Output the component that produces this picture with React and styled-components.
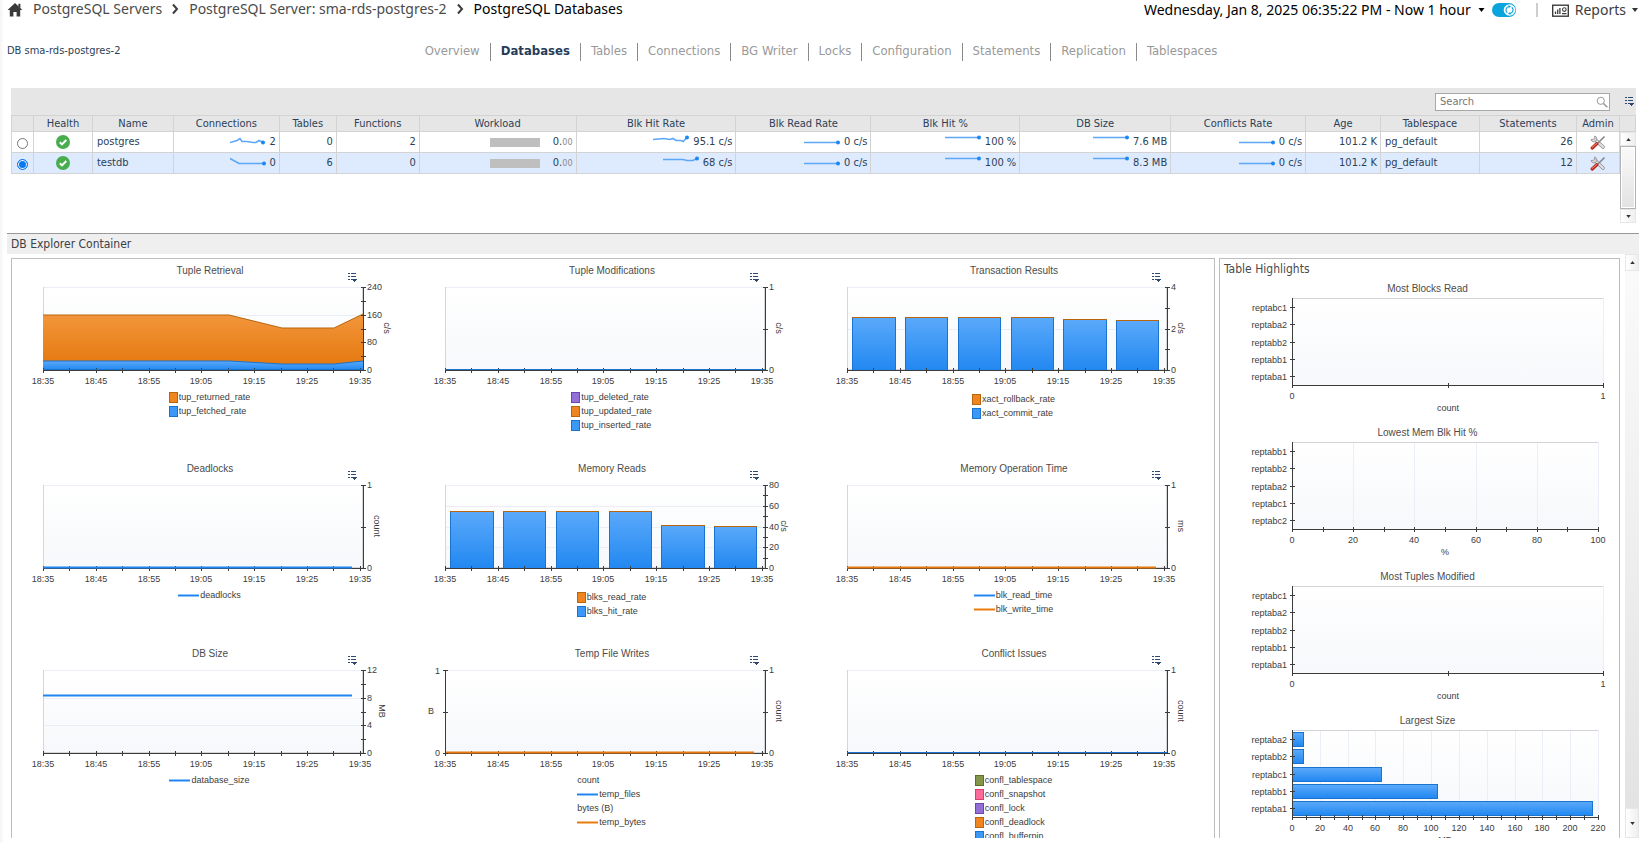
import { useState } from "react";
import styled, { createGlobalStyle } from "styled-components";

const GlobalStyle = createGlobalStyle`
  * {
    box-sizing: border-box;
  }
  body {
    margin: 0;
    background: #fff;
    font-family: "DejaVu Sans Condensed", "Noto Sans", sans-serif;
    font-size: 11px;
    color: #2b3f58;
  }
  button {
    padding: 0;
    border: none;
    background: none;
    font: inherit;
    color: inherit;
    cursor: pointer;
  }
  a {
    color: inherit;
    text-decoration: none;
  }
  svg {
    display: block;
  }
`;

const Page = styled.div`
  height: 100vh;
  display: flex;
  flex-direction: column;
  overflow: hidden;
  padding-bottom: 5px;
  background: linear-gradient(to right, #f4f4f4, #fff 4px);
`;

const TopBar = styled.header`
  display: flex;
  align-items: flex-start;
  justify-content: space-between;
  height: 19px;
  padding: 0 4px 0 7px;
  font-family: "Noto Sans", sans-serif;
  font-size: 14px;
  line-height: 18px;
`;

const Breadcrumb = styled.nav`
  display: flex;
  align-items: center;
  color: #4a4a4a;
`;

const Crumb = styled.a`
  color: ${(props) => (props.$current ? "#000" : "#4a4a4a")};
`;

const HomeLink = styled.a`
  margin-right: 10px;
`;

const Chevron = styled.svg`
  margin: 0 10px 0 9px;
`;

const TopTools = styled.div`
  display: flex;
  align-items: center;
  padding-top: 1px;
`;

const TimeButton = styled.button`
  display: flex;
  align-items: center;
  gap: 7px;
  color: #000;
`;

const Toggle = styled.button`
  margin-left: 7px;
`;

const ToolDivider = styled.span`
  width: 2px;
  height: 14px;
  margin: 0 14px 0 20px;
  background: #d0cdd0;
`;

const ReportsButton = styled.button`
  display: flex;
  align-items: center;
  gap: 6px;
  color: #3c3c3c;
`;

const SubBar = styled.div`
  display: grid;
  grid-template-columns: 1fr auto 1fr;
  align-items: center;
  height: 18px;
  margin: 24px 0 27px;
  padding: 0 7px;
`;

const DbLabel = styled.div`
  font-size: 11px;
  line-height: 16px;
  padding-bottom: 2px;
`;

const Tabs = styled.nav`
  display: flex;
  font-size: 13px;
  line-height: 16px;
`;

const Tab = styled.a`
  padding: 0 10px 2px;
  border-left: 1px solid #8c8c8c;
  color: ${(props) => (props.$active ? "#263c58" : "#999")};
  font-weight: ${(props) => (props.$active ? "bold" : "normal")};
  &:first-child {
    border-left: none;
  }
`;

const TablePanel = styled.section`
  margin: 0 6px 10px 11px;
`;

const Toolbar = styled.div`
  display: flex;
  align-items: center;
  justify-content: flex-end;
  gap: 15px;
  height: 27px;
  padding-right: 1px;
  background: #e6e6e6;
`;

const SearchBox = styled.label`
  display: flex;
  align-items: center;
  width: 175px;
  height: 18px;
  padding: 0 1px 0 4px;
  border: 1px solid #a8a8a8;
  background: #fff;
`;

const SearchInput = styled.input`
  flex: 1;
  min-width: 0;
  padding: 0;
  border: none;
  outline: none;
  font: inherit;
  &::placeholder {
    color: #777;
  }
`;

const TableArea = styled.div`
  display: flex;
`;

const Table = styled.table`
  flex: 1;
  width: 100%;
  align-self: flex-start;
  table-layout: fixed;
  border-collapse: collapse;
`;

const Th = styled.th`
  height: 16px;
  padding: 0;
  border: 1px solid #d3d3d3;
  background: #e6e6e6;
  font-weight: normal;
  line-height: 14px;
  text-align: center;
  white-space: nowrap;
`;

const Tr = styled.tr`
  background: ${(props) => (props.$selected ? "#deeafe" : "#fff")};
`;

const Td = styled.td`
  height: 21px;
  padding: 0 3px 0 4px;
  border: 1px solid #d3d3d3;
  line-height: 14px;
  white-space: nowrap;
  text-align: ${(props) => props.$align || "right"};
`;

const CellRow = styled.div`
  display: flex;
  align-items: center;
  justify-content: ${(props) => (props.$center ? "center" : "flex-end")};
  gap: 4px;
`;

const Radio = styled.input`
  appearance: none;
  width: 11px;
  height: 11px;
  margin: 3px 0 0;
  border: 1px solid #767676;
  border-radius: 50%;
  background: #fff;
  &:checked {
    border-color: #0b78f0;
    background: #0b78f0;
    box-shadow: inset 0 0 0 1px #fff;
  }
`;

const WorkloadBar = styled.span`
  width: 50px;
  height: 9px;
  margin-right: 9px;
  background: #bfbfbf;
`;

const Decimals = styled.small`
  font-size: 9px;
  color: #8a8a8a;
`;

const TableScroll = styled.div`
  display: flex;
  flex-direction: column;
  width: 16px;
  height: 108px;
`;

const ScrollHead = styled.div`
  height: 17px;
  border: 1px solid #d3d3d3;
  border-left: none;
  background: #e6e6e6;
`;

const ScrollButton = styled.button`
  display: flex;
  align-items: center;
  justify-content: center;
  height: ${(props) => props.$height || 14}px;
  border: 1px solid #e6e6e6;
  background: linear-gradient(to right, #fff, #efefef);
`;

const TableThumb = styled.div`
  flex: 1;
  border: 1px solid #b3b3b8;
  box-shadow: inset 0 0 0 1px #fff;
  background: linear-gradient(#fafafa, #e2e2e2);
`;

const Explorer = styled.section`
  flex: 1;
  display: flex;
  flex-direction: column;
  min-height: 0;
  margin: 0 3px 0 7px;
`;

const ExplorerTitle = styled.h2`
  margin: 0;
  height: 21px;
  padding-left: 4px;
  border-top: 1px solid #999;
  background: #efefef;
  font-size: 12px;
  font-weight: normal;
  line-height: 21px;
  color: #3c4046;
`;

const ExplorerBody = styled.div`
  flex: 1;
  display: flex;
  min-height: 0;
  padding-left: 4px;
`;

const ChartPanel = styled.div`
  flex: 1;
  display: grid;
  grid-template-columns: repeat(3, 1fr);
  grid-template-rows: 198px 185px 1fr;
  column-gap: 4px;
  margin-top: 4px;
  border: 1px solid #bdbdbd;
  border-bottom: none;
  overflow: hidden;
`;

const HighlightPanel = styled.div`
  width: 401px;
  margin: 4px 5px 0 4px;
  border: 1px solid #bdbdbd;
  border-bottom: none;
  overflow: hidden;
`;

const PanelTitle = styled.h3`
  margin: 0;
  height: 23px;
  padding-left: 4px;
  font-size: 12px;
  font-weight: normal;
  line-height: 20px;
  color: #4a4a4a;
`;

const ExplorerScroll = styled.div`
  display: flex;
  flex-direction: column;
  width: 14px;
`;

const ScrollTrack = styled.div`
  flex: 1;
  background: linear-gradient(#fafafa, #e3e3e3);
`;

const ChartBox = styled.figure`
  min-width: 0;
  margin: 0;
  font-family: "Liberation Sans", Arial, sans-serif;
`;

const ChartHead = styled.div`
  display: grid;
  grid-template-columns: 60px 1fr 62px;
  height: 24px;
`;

const ChartTitle = styled.figcaption`
  grid-column: 2;
  font-size: 10px;
  line-height: 24px;
  text-align: center;
  color: #4c4c4c;
`;

const MenuButton = styled.button`
  align-self: end;
  justify-self: start;
`;

const Plot = styled.svg`
  width: 100%;
  height: ${(props) => props.$height}px;
  font-family: "Liberation Sans", Arial, sans-serif;
  font-size: 9px;
  fill: #3c3c3c;
`;

const Legend = styled.ul`
  width: fit-content;
  margin: 0 auto;
  padding: ${(props) => (props.$low ? "2px 3px 0 0" : "0 3px 0 0")};
  list-style: none;
`;

const LegendItem = styled.li`
  display: flex;
  align-items: center;
  height: 14px;
  gap: 1px;
  font-size: 9px;
  color: #3c3c3c;
`;

const Swatch = styled.span`
  width: 9px;
  height: 11px;
  border: 1px solid ${(props) => props.$edge};
  background: ${(props) => props.$fill};
`;

const LineMark = styled.span`
  width: 21px;
  height: 3px;
  border: solid ${(props) => props.$glow};
  border-width: 1px 0;
  background: ${(props) => props.$line};
`;

const SideTitle = styled.figcaption`
  padding-left: 16px;
  font-size: 10px;
  line-height: 14px;
  text-align: center;
  color: #4c4c4c;
`;

const COLORS = {
  blue: { fill: "#3c98f7", edge: "#1a73cf", line: "#1e86f2", glow: "#93c4f9" },
  orange: { fill: "#ee8520", edge: "#b9650c", line: "#e6780f", glow: "#f5bf86" },
  purple: { fill: "#9370d8", edge: "#6a46b4" },
  green: { fill: "#84964a", edge: "#5d6f28" },
  pink: { fill: "#fd6b9b", edge: "#d83e70" },
};

const SPARKS = {
  top: "0,3 34,3",
  low: "0,8 34,8",
  conn1: "0,8 7,6 10,4 12,7 17,7 23,8 26,8 29,6 33,8",
  conn2: "0,3 9,8 34,8",
  hit1: "0,5 11,4 17,5 20,4 23,6 28,6 30,7 34,3",
  hit2: "0,4 20,4 24,5 30,5 34,3",
};

const COLUMNS = [
  ["", 22],
  ["Health", 59],
  ["Name", 81],
  ["Connections", 106],
  ["Tables", 57],
  ["Functions", 83],
  ["Workload", 157],
  ["Blk Hit Rate", 160],
  ["Blk Read Rate", 135],
  ["Blk Hit %", 149],
  ["DB Size", 151],
  ["Conflicts Rate", 135],
  ["Age", 75],
  ["Tablespace", 99],
  ["Statements", 97],
  ["Admin", 43],
];
const TOTAL_WIDTH = COLUMNS.reduce((sum, col) => sum + col[1], 0);

const ROWS = [
  {
    name: "postgres",
    connections: 2,
    connSpark: "conn1",
    tables: 0,
    functions: 2,
    hitRate: "95.1 c/s",
    hitSpark: "hit1",
    size: "7.6 MB",
    statements: 26,
  },
  {
    name: "testdb",
    connections: 0,
    connSpark: "conn2",
    tables: 6,
    functions: 0,
    hitRate: "68 c/s",
    hitSpark: "hit2",
    size: "8.3 MB",
    statements: 12,
  },
];

const TABS = [
  "Overview",
  "Databases",
  "Tables",
  "Connections",
  "BG Writer",
  "Locks",
  "Configuration",
  "Statements",
  "Replication",
  "Tablespaces",
];

// heights of bars and points are in plot pixels, counted from the top of the svg
const CHARTS = [
  {
    title: "Tuple Retrieval",
    unit: "c/s",
    labels: ["240", "160", "80", "0"],
    minor: 6,
    areas: [
      { color: "orange", points: "31,32 217,32 270,45 322,45 351,31" },
      { color: "blue", points: "31,78 217,78 270,81 322,81 351,78" },
    ],
    legend: [
      ["orange", "tup_returned_rate"],
      ["blue", "tup_fetched_rate"],
    ],
  },
  {
    title: "Tuple Modifications",
    unit: "c/s",
    labels: ["1", "0"],
    minor: 2,
    flat: "blue",
    legend: [
      ["purple", "tup_deleted_rate"],
      ["orange", "tup_updated_rate"],
      ["blue", "tup_inserted_rate"],
    ],
  },
  {
    title: "Transaction Results",
    unit: "c/s",
    labels: ["4", "2", "0"],
    minor: 4,
    bars: [35, 35, 35, 35, 37, 38],
    legend: [
      ["orange", "xact_rollback_rate"],
      ["blue", "xact_commit_rate"],
    ],
  },
  {
    title: "Deadlocks",
    unit: "count",
    labels: ["1", "0"],
    minor: 2,
    line: { color: "blue", y: 86 },
    marks: true,
    legend: [["blue", "deadlocks"]],
  },
  {
    title: "Memory Reads",
    unit: "c/s",
    labels: ["80", "60", "40", "20", "0"],
    minor: 8,
    bars: [31, 31, 31, 31, 45, 46],
    legend: [
      ["orange", "blks_read_rate"],
      ["blue", "blks_hit_rate"],
    ],
  },
  {
    title: "Memory Operation Time",
    unit: "ms",
    labels: ["1", "0"],
    minor: 2,
    line: { color: "orange", y: 86 },
    marks: true,
    legend: [
      ["blue", "blk_read_time"],
      ["orange", "blk_write_time"],
    ],
  },
  {
    title: "DB Size",
    unit: "MB",
    labels: ["12", "8", "4", "0"],
    minor: 6,
    line: { color: "blue", y: 29 },
    marks: true,
    legend: [["blue", "database_size"]],
  },
  {
    title: "Temp File Writes",
    unit: "count",
    labels: ["1", "0"],
    minor: 2,
    leftUnit: "B",
    line: { color: "orange", y: 86 },
    marks: true,
    legend: [
      [null, "count"],
      ["blue", "temp_files"],
      [null, "bytes (B)"],
      ["orange", "temp_bytes"],
    ],
  },
  {
    title: "Conflict Issues",
    unit: "count",
    labels: ["1", "0"],
    minor: 2,
    flat: "blue",
    legend: [
      ["green", "confl_tablespace"],
      ["pink", "confl_snapshot"],
      ["purple", "confl_lock"],
      ["orange", "confl_deadlock"],
      ["blue", "confl_bufferpin"],
    ],
  },
];

const SIDE_CHARTS = [
  {
    title: "Most Blocks Read",
    names: ["reptabc1", "reptaba2", "reptabb2", "reptabb1", "reptaba1"],
    right: 383,
    max: 1,
    step: 1,
    unit: "count",
  },
  {
    title: "Lowest Mem Blk Hit %",
    names: ["reptabb1", "reptabb2", "reptaba2", "reptabc1", "reptabc2"],
    right: 378,
    max: 100,
    step: 20,
    unit: "%",
  },
  {
    title: "Most Tuples Modified",
    names: ["reptabc1", "reptaba2", "reptabb2", "reptabb1", "reptaba1"],
    right: 383,
    max: 1,
    step: 1,
    unit: "count",
  },
  {
    title: "Largest Size",
    names: ["reptaba2", "reptabb2", "reptabc1", "reptabb1", "reptaba1"],
    right: 378,
    max: 220,
    step: 20,
    unit: "MB",
    values: [8.5, 8.5, 64.5, 105, 216.5],
  },
];

const TIMES = ["18:35", "18:45", "18:55", "19:05", "19:15", "19:25", "19:35"];
const BAR_X = [
  [36, 80],
  [89, 132],
  [142, 185],
  [195, 238],
  [247, 291],
  [300, 343],
];

const LEFT = 31;
const RIGHT = 351;
const TOP = 4;
const BOTTOM = 87;

const MenuIcon = () => (
  <svg width="10" height="10" viewBox="0 0 10 10" shapeRendering="crispEdges">
    <path
      d="M0 1h2v-1h-2zM3 1h5v-1h-5zM0 4h2v-1h-2zM3 4h5v-1h-5zM0 7h2v-1h-2z"
      fill="#2f4a70"
    />
    <path d="M3 6h6v1h-1v1h-1v1h-1v-1h-1v-1h-2z" fill="#2f4a70" />
  </svg>
);

const Caret = ({ up, color = "#333", w = 6, h = 4 }) => (
  <svg width={w} height={h} viewBox="0 0 6 4">
    <path d={up ? "M0 4L3 0L6 4z" : "M0 0L3 4L6 0z"} fill={color} />
  </svg>
);

const CrumbArrow = () => (
  <Chevron width="8" height="12" viewBox="0 0 8 12">
    <path d="M2 1.5L6 6L2 10.5" fill="none" stroke="#3c3c3c" strokeWidth="2" />
  </Chevron>
);

const Spark = ({ points }) => {
  const end = points.split(" ").pop().split(",");
  return (
    <svg width="36" height="16" viewBox="0 0 36 16">
      <polyline
        points={points}
        transform="translate(0 .5)"
        fill="none"
        stroke="#5da7f8"
        strokeWidth="1.6"
      />
      <circle cx={end[0]} cy={Number(end[1]) + 0.5} r="2" fill="#1b86f5" />
    </svg>
  );
};

const HealthIcon = () => (
  <svg width="14" height="14" viewBox="0 0 14 14">
    <circle cx="7" cy="7" r="7" fill="#48ad4d" />
    <path d="M3.8 7.2L6 9.4L10.3 5" fill="none" stroke="#fff" strokeWidth="2" />
  </svg>
);

const AdminIcon = () => (
  <svg width="16" height="15" viewBox="0 0 16 15">
    <path
      d="M6 5.5L13 12"
      stroke="#8a8a90"
      strokeWidth="3.6"
      strokeLinecap="round"
    />
    <path
      d="M6 5.5L13 12"
      stroke="#e2e2e6"
      strokeWidth="2.2"
      strokeLinecap="round"
    />
    <path
      d="M1 4.5A3 3 0 0 0 6 6A3 3 0 0 0 4.5 1L5 3.4L3.4 4.2z"
      fill="#d8d8dc"
      stroke="#8a8a90"
      strokeWidth=".8"
    />
    <path d="M8 8L13 3L14.5 1.5" stroke="#85858b" strokeWidth="1.6" />
    <path d="M2.2 13L6.8 8.8" stroke="#b3261a" strokeWidth="3.2" strokeLinecap="round" />
    <path d="M2.2 12.4L6.6 8.6" stroke="#f07a66" strokeWidth="1.2" strokeLinecap="round" />
  </svg>
);

const Gradients = () => (
  <defs>
    <linearGradient id="plotFill" x1="0" y1="0" x2="0" y2="1">
      <stop offset="0" stopColor="#fff" />
      <stop offset="1" stopColor="#f6f8fb" />
    </linearGradient>
    <linearGradient id="blueFill" x1="0" y1="0" x2="0" y2="1">
      <stop offset="0" stopColor="#5aa9fa" />
      <stop offset="1" stopColor="#2288f1" />
    </linearGradient>
    <linearGradient id="orangeFill" x1="0" y1="0" x2="0" y2="1">
      <stop offset="0" stopColor="#f2963c" />
      <stop offset="1" stopColor="#e4760a" />
    </linearGradient>
  </defs>
);

const TimeChart = ({ chart }) => {
  const height = BOTTOM - TOP;
  const yAt = (i, count) => Math.round(TOP + (height * i) / count);
  const xAt = (i) => Math.round(LEFT + i * 26.4);
  const unitX = RIGHT + 6 + chart.labels[0].length * 5;
  const ticks = [...Array(chart.minor + 1).keys()];
  const last = chart.labels.length - 1;

  return (
    <ChartBox>
      <ChartHead>
        <ChartTitle>{chart.title}</ChartTitle>
        <MenuButton aria-label={chart.title + " menu"}>
          <MenuIcon />
        </MenuButton>
      </ChartHead>
      <Plot $height={107} viewBox="0 0 398 107" preserveAspectRatio="xMinYMin">
        <Gradients />
        <g shapeRendering="crispEdges">
          <rect x={LEFT} y={TOP} width={RIGHT - LEFT} height={height} fill="url(#plotFill)" />
          {chart.labels.slice(0, last).map((label, i) => (
            <rect key={label} x={LEFT} y={yAt(i, last)} width={RIGHT - LEFT} height="1" fill="#eceef7" />
          ))}
          <rect x={LEFT} y={TOP} width="1" height={height} fill="#d5d6da" />
          <rect x={RIGHT - 1} y={TOP} width="1" height={height} fill="#d5d6da" />
          <rect x={LEFT} y={BOTTOM - 1} width={RIGHT - LEFT} height="1" fill="#d5d6da" />
        </g>
        {chart.areas &&
          chart.areas.map((area) => (
            <g key={area.color}>
              <polygon
                points={`${area.points} ${RIGHT},${BOTTOM} ${LEFT},${BOTTOM}`}
                fill={`url(#${area.color}Fill)`}
              />
              <polyline points={area.points} fill="none" stroke={COLORS[area.color].edge} />
            </g>
          ))}
        {chart.bars &&
          chart.bars.map((y, i) => (
            <g key={i} shapeRendering="crispEdges">
              <rect x={BAR_X[i][0]} y={y} width={BAR_X[i][1] - BAR_X[i][0]} height={BOTTOM - y} fill="#1a73cf" />
              <rect
                x={BAR_X[i][0] + 1}
                y={y}
                width={BAR_X[i][1] - BAR_X[i][0] - 2}
                height={BOTTOM - y}
                fill="url(#blueFill)"
              />
              <rect x={BAR_X[i][0]} y={y - 1} width={BAR_X[i][1] - BAR_X[i][0]} height="1" fill="#b9650c" />
            </g>
          ))}
        <g shapeRendering="crispEdges">
          <rect x={LEFT} y={BOTTOM} width={RIGHT - LEFT} height="1" />
          <rect x={RIGHT} y={TOP} width="1" height={height} />
          {ticks.map((i) => (
            <rect key={i} x={RIGHT - 2} y={yAt(i, chart.minor)} width="5" height="1" />
          ))}
          {[...Array(13).keys()].map((i) => (
            <rect key={i} x={xAt(i)} y={BOTTOM - 2} width="1" height="5" />
          ))}
          {(chart.flat || chart.areas) && (
            <rect x={LEFT} y={BOTTOM - 1} width={RIGHT - LEFT} height="1" fill="#1a73cf" />
          )}
          {chart.line && (
            <>
              <rect
                x={LEFT}
                y={chart.line.y - 1}
                width="309"
                height="3"
                fill={COLORS[chart.line.color].line}
                opacity=".5"
              />
              <rect x={LEFT} y={chart.line.y} width="309" height="1" fill={COLORS[chart.line.color].line} />
            </>
          )}
          {chart.leftUnit && (
            <>
              <rect x={LEFT} y={TOP} width="1" height={height} />
              {ticks.map((i) => (
                <rect key={i} x={LEFT - 2} y={yAt(i, chart.minor)} width="5" height="1" />
              ))}
            </>
          )}
        </g>
        {chart.labels.map((label, i) => (
          <text key={label} x={RIGHT + 4} y={yAt(i, last) + 3}>
            {label}
          </text>
        ))}
        {chart.leftUnit && (
          <g>
            <text x={LEFT - 10} y={TOP + 4}>
              1
            </text>
            <text x={LEFT - 10} y={BOTTOM + 3}>
              0
            </text>
            <text x={LEFT - 17} y={TOP + 44}>
              {chart.leftUnit}
            </text>
          </g>
        )}
        <text x="0" y="0" textAnchor="middle" transform={`translate(${unitX} 45) rotate(90)`}>
          {chart.unit}
        </text>
        {TIMES.map((time, i) => (
          <text key={time} x={xAt(i * 2)} y={BOTTOM + 14} textAnchor="middle">
            {time}
          </text>
        ))}
      </Plot>
      <Legend $low={Boolean(chart.bars)}>
        {chart.legend.map(([color, label]) => (
          <LegendItem key={label}>
            {color && chart.marks && <LineMark $line={COLORS[color].line} $glow={COLORS[color].glow} />}
            {color && !chart.marks && <Swatch $fill={COLORS[color].fill} $edge={COLORS[color].edge} />}
            {label}
          </LegendItem>
        ))}
      </Legend>
    </ChartBox>
  );
};

const SideChart = ({ chart }) => {
  const left = 72;
  const width = chart.right - left;
  const count = chart.max / chart.step;
  const xAt = (i, total) => Math.round(left + (width * i) / total);
  const yAt = (i) => Math.round(11 + i * 17.3);
  const labels = [...Array(count + 1).keys()];

  return (
    <ChartBox>
      <SideTitle>{chart.title}</SideTitle>
      <Plot $height={130} viewBox="0 0 399 130" preserveAspectRatio="xMinYMin">
        <Gradients />
        <g shapeRendering="crispEdges">
          <rect x={left} y="2" width={width} height="87" fill="url(#plotFill)" />
          {labels.slice(1).map((i) => (
            <rect key={i} x={xAt(i, count)} y="2" width="1" height="87" fill="#eceef7" />
          ))}
          <rect x={left} y="2" width={width} height="1" fill="#d3d4d6" />
          {chart.values &&
            chart.values.map((value, i) => (
              <g key={i}>
                <rect
                  x={left}
                  y={yAt(i) - 7}
                  width={Math.round((value / chart.max) * width)}
                  height="15"
                  fill="#1a73cf"
                />
                <rect
                  x={left}
                  y={yAt(i) - 6}
                  width={Math.round((value / chart.max) * width) - 1}
                  height="13"
                  fill="url(#blueFill)"
                />
              </g>
            ))}
          <rect x={left} y="2" width="1" height="88" />
          <rect x={left} y="89" width={width + 1} height="1" />
          {chart.names.map((name, i) => (
            <rect key={name} x={left - 2} y={yAt(i)} width="5" height="1" />
          ))}
          {[...Array(count * 2 + 1).keys()].map((i) => (
            <rect key={i} x={xAt(i, count * 2)} y="87" width="1" height="5" />
          ))}
        </g>
        {chart.names.map((name, i) => (
          <text key={name} x={left - 5} y={yAt(i) + 4} textAnchor="end">
            {name}
          </text>
        ))}
        {labels.map((i) => (
          <text key={i} x={xAt(i, count)} y="103" textAnchor="middle">
            {i * chart.step}
          </text>
        ))}
        <text x={left + Math.round(width / 2)} y="115" textAnchor="middle">
          {chart.unit}
        </text>
      </Plot>
    </ChartBox>
  );
};

const App = () => {
  const [selected, setSelected] = useState("testdb");
  const [search, setSearch] = useState("");

  return (
    <>
      <GlobalStyle />
      <Page>
        <TopBar>
          <Breadcrumb>
            <HomeLink href="#" aria-label="Home">
              <svg width="16" height="15" viewBox="0 0 16 15">
                <path
                  d="M8 1L15.4 8H13.2V14.5H9.6V10H6.4V14.5H2.8V8H.6L8 1zM11.4 1.8H13.4V6L11.4 4z"
                  fill="#3a3a3a"
                />
              </svg>
            </HomeLink>
            <Crumb href="#">PostgreSQL Servers</Crumb>
            <CrumbArrow />
            <Crumb href="#">PostgreSQL Server: sma-rds-postgres-2</Crumb>
            <CrumbArrow />
            <Crumb href="#" $current>
              PostgreSQL Databases
            </Crumb>
          </Breadcrumb>
          <TopTools>
            <TimeButton>
              Wednesday, Jan 8, 2025 06:35:22 PM - Now 1 hour
              <Caret color="#000" w={7} />
            </TimeButton>
            <Toggle role="switch" aria-checked="true" aria-label="Auto refresh">
              <svg width="24" height="14" viewBox="0 0 24 14">
                <rect width="24" height="14" rx="7" fill="#0aa5dc" />
                <circle cx="17.5" cy="7" r="5.8" fill="#fff" />
                <path
                  d="M15.2 9.8A3.6 3.6 0 0 1 17 3.5M19.8 4.2A3.6 3.6 0 0 1 18 10.5"
                  fill="none"
                  stroke="#0aa5dc"
                  strokeWidth="1.2"
                />
                <path d="M16.6 2L19 3.5L16.8 5zM18.4 12L16 10.5L18.2 9z" fill="#0aa5dc" />
              </svg>
            </Toggle>
            <ToolDivider />
            <ReportsButton>
              <svg width="17" height="13" viewBox="0 0 17 13">
                <rect x=".7" y="1.2" width="15.6" height="11" fill="none" stroke="#3c3c3c" strokeWidth="1.4" />
                <path d="M3.5 10V7.5M5.7 10V5.5M7.9 10V4M10 9.6H14.5" stroke="#3c3c3c" strokeWidth="1.3" />
                <circle cx="12.3" cy="5.6" r="1.8" fill="none" stroke="#3c3c3c" strokeWidth="1.1" />
              </svg>
              Reports
              <Caret />
            </ReportsButton>
          </TopTools>
        </TopBar>

        <SubBar>
          <DbLabel>DB sma-rds-postgres-2</DbLabel>
          <Tabs>
            {TABS.map((tab) => (
              <Tab key={tab} href="#" $active={tab === "Databases"}>
                {tab}
              </Tab>
            ))}
          </Tabs>
        </SubBar>

        <TablePanel>
          <Toolbar>
            <SearchBox>
              <SearchInput
                aria-label="Search"
                placeholder="Search"
                value={search}
                onChange={(e) => setSearch(e.target.value)}
              />
              <svg width="12" height="12" viewBox="0 0 12 12">
                <circle cx="4.8" cy="4.8" r="3.6" fill="none" stroke="#999" />
                <path d="M7.5 7.5L11.3 11.3" stroke="#999" strokeWidth="1.6" />
              </svg>
            </SearchBox>
            <button aria-label="Table menu">
              <MenuIcon />
            </button>
          </Toolbar>
          <TableArea>
            <Table>
              <colgroup>
                {COLUMNS.map(([name, width]) => (
                  <col key={name} style={{ width: (width / TOTAL_WIDTH) * 100 + "%" }} />
                ))}
              </colgroup>
              <thead>
                <tr>
                  {COLUMNS.map(([name]) => (
                    <Th key={name}>{name}</Th>
                  ))}
                </tr>
              </thead>
              <tbody>
                {ROWS.map((row) => (
                  <Tr key={row.name} $selected={row.name === selected}>
                    <Td>
                      <CellRow $center>
                        <Radio
                          type="radio"
                          name="database"
                          aria-label={row.name}
                          checked={row.name === selected}
                          onChange={() => setSelected(row.name)}
                        />
                      </CellRow>
                    </Td>
                    <Td>
                      <CellRow $center>
                        <HealthIcon />
                      </CellRow>
                    </Td>
                    <Td $align="left">{row.name}</Td>
                    <Td>
                      <CellRow>
                        <Spark points={SPARKS[row.connSpark]} />
                        {row.connections}
                      </CellRow>
                    </Td>
                    <Td>{row.tables}</Td>
                    <Td>{row.functions}</Td>
                    <Td>
                      <CellRow>
                        <WorkloadBar />
                        <span>
                          0.<Decimals>00</Decimals>
                        </span>
                      </CellRow>
                    </Td>
                    <Td>
                      <CellRow>
                        <Spark points={SPARKS[row.hitSpark]} />
                        {row.hitRate}
                      </CellRow>
                    </Td>
                    <Td>
                      <CellRow>
                        <Spark points={SPARKS.low} />0 c/s
                      </CellRow>
                    </Td>
                    <Td>
                      <CellRow>
                        <Spark points={SPARKS.top} />
                        100 %
                      </CellRow>
                    </Td>
                    <Td>
                      <CellRow>
                        <Spark points={SPARKS.top} />
                        {row.size}
                      </CellRow>
                    </Td>
                    <Td>
                      <CellRow>
                        <Spark points={SPARKS.low} />0 c/s
                      </CellRow>
                    </Td>
                    <Td>101.2 K</Td>
                    <Td $align="left">pg_default</Td>
                    <Td>{row.statements}</Td>
                    <Td>
                      <CellRow $center>
                        <button aria-label={"Administer " + row.name}>
                          <AdminIcon />
                        </button>
                      </CellRow>
                    </Td>
                  </Tr>
                ))}
              </tbody>
            </Table>
            <TableScroll>
              <ScrollHead />
              <ScrollButton aria-label="Scroll up">
                <Caret up w={5} h={3} />
              </ScrollButton>
              <TableThumb />
              <ScrollButton aria-label="Scroll down">
                <Caret w={5} h={3} />
              </ScrollButton>
            </TableScroll>
          </TableArea>
        </TablePanel>

        <Explorer>
          <ExplorerTitle>DB Explorer Container</ExplorerTitle>
          <ExplorerBody>
            <ChartPanel>
              {CHARTS.map((chart) => (
                <TimeChart key={chart.title} chart={chart} />
              ))}
            </ChartPanel>
            <HighlightPanel>
              <PanelTitle>Table Highlights</PanelTitle>
              {SIDE_CHARTS.map((chart) => (
                <SideChart key={chart.title} chart={chart} />
              ))}
            </HighlightPanel>
            <ExplorerScroll>
              <ScrollButton $height={17} aria-label="Scroll up">
                <Caret up w={5} h={3} />
              </ScrollButton>
              <ScrollTrack />
              <ScrollButton $height={30} aria-label="Scroll down">
                <Caret w={5} h={3} />
              </ScrollButton>
            </ExplorerScroll>
          </ExplorerBody>
        </Explorer>
      </Page>
    </>
  );
};

export default App;
